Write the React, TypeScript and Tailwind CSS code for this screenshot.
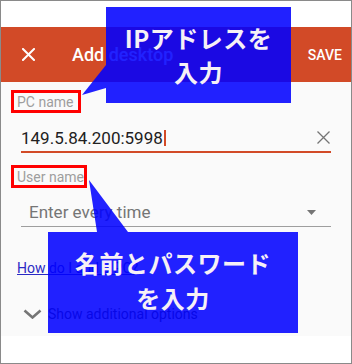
import React from "react";

const ui = { fontFamily: "Roboto, 'Liberation Sans', sans-serif" };
const jp = { fontFamily: "'Noto Sans CJK JP', 'Noto Sans', sans-serif" };

export default function App() {
  return (
    <div
      className="relative w-[352px] h-[364px] border border-[#8a8a8a] bg-white overflow-hidden"
      style={ui}
    >
      <div className="h-[26px] bg-white" />
      {/* Header */}
      <div className="h-[55px] bg-[#d24a27] flex items-center pl-[21px] pr-[9px]">
        <svg width="13" height="13" viewBox="0 0 13 13" className="shrink-0">
          <path d="M1 1 L12 12 M12 1 L1 12" stroke="white" strokeWidth="2" strokeLinecap="square" />
        </svg>
        <div className="ml-[37px] text-[18px] font-medium text-white leading-none">Add desktop</div>
        <div className="ml-auto text-[14px] font-medium text-white leading-none">SAVE</div>
      </div>
      {/* Body */}
      <div className="h-[254px] bg-[#fafafa] flex flex-col">
        <div className="mt-[8px] ml-[10px] w-[70px] h-[23px] border-[3px] border-[#ff0000] pl-[3px] flex items-center text-[14px] text-[#9e9e9e] leading-none">
          PC name
        </div>
        <div className="ml-[20px] w-[310px] h-[40px] border-b-2 border-[#d24a27] pt-[12px] flex items-center">
          <span className="text-[17px] text-[#212121] leading-none">149.5.84.200:5998</span>
          <span className="w-[2px] h-[16px] bg-[#d24a27] ml-[1px]" />
          <svg width="13" height="13" viewBox="0 0 13 13" className="ml-auto mr-[1px] -mt-[2px]">
            <path d="M0.5 0.5 L12.5 12.5 M12.5 0.5 L0.5 12.5" stroke="#757575" strokeWidth="1.3" />
          </svg>
        </div>
        <div className="mt-[12px] ml-[10px] w-[76px] h-[23px] border-[3px] border-[#ff0000] pl-[3px] flex items-center text-[14px] text-[#9e9e9e] leading-none">
          User name
        </div>
        <div className="ml-[20px] w-[310px] h-[39px] border-b border-[#9e9e9e] pt-[10px] flex items-center">
          <span className="ml-[8px] text-[17px] text-[#757575] leading-none">Enter every time</span>
          <svg width="9" height="5" viewBox="0 0 9 5" className="ml-auto mr-[15px]">
            <polygon points="0,0 9,0 4.5,5" fill="#757575" />
          </svg>
        </div>
        <div className="mt-[31px] ml-[16px] h-[20px] flex items-center">
          <span className="text-[14px] text-[#2a2ac4] underline leading-none">How do I add a PC?</span>
        </div>
        <div className="mt-[26px] ml-[22px] h-[20px] flex items-center">
          <svg width="19" height="10" viewBox="0 0 19 10">
            <path d="M1.5 1.5 L9.5 8.5 L17.5 1.5" stroke="#757575" strokeWidth="2.6" fill="none" />
          </svg>
          <span className="ml-[6px] text-[14px] text-[#424242] leading-none">Show additional options</span>
        </div>
      </div>

      {/* Annotation tails */}
      <svg className="absolute left-[-1px] top-[-1px] pointer-events-none" width="352" height="364" viewBox="0 0 352 364">
        <polygon points="106,65 82,95 106,88" fill="rgba(0,0,255,0.87)" />
        <polygon points="89,180 97,232 128,232" fill="rgba(0,0,255,0.87)" />
      </svg>
      {/* Callout 1 */}
      <div
        className="absolute left-[105px] top-[6px] w-[185px] h-[96px] bg-[rgba(0,0,255,0.87)] pt-[14px] text-center text-[24px] leading-[34px] font-bold tracking-[0.5px] text-[#f6f0f6]"
        style={jp}
      >
        <div>IPアドレスを</div>
        <div>入力</div>
      </div>
      {/* Callout 2 */}
      <div
        className="absolute left-[47px] top-[231px] w-[250px] h-[101px] bg-[rgba(0,0,255,0.87)] pt-[13px] text-center text-[24px] leading-[35px] font-bold tracking-[0.5px] text-[#f6f0f6]"
        style={jp}
      >
        <div>名前とパスワード</div>
        <div>を入力</div>
      </div>
    </div>
  );
}
